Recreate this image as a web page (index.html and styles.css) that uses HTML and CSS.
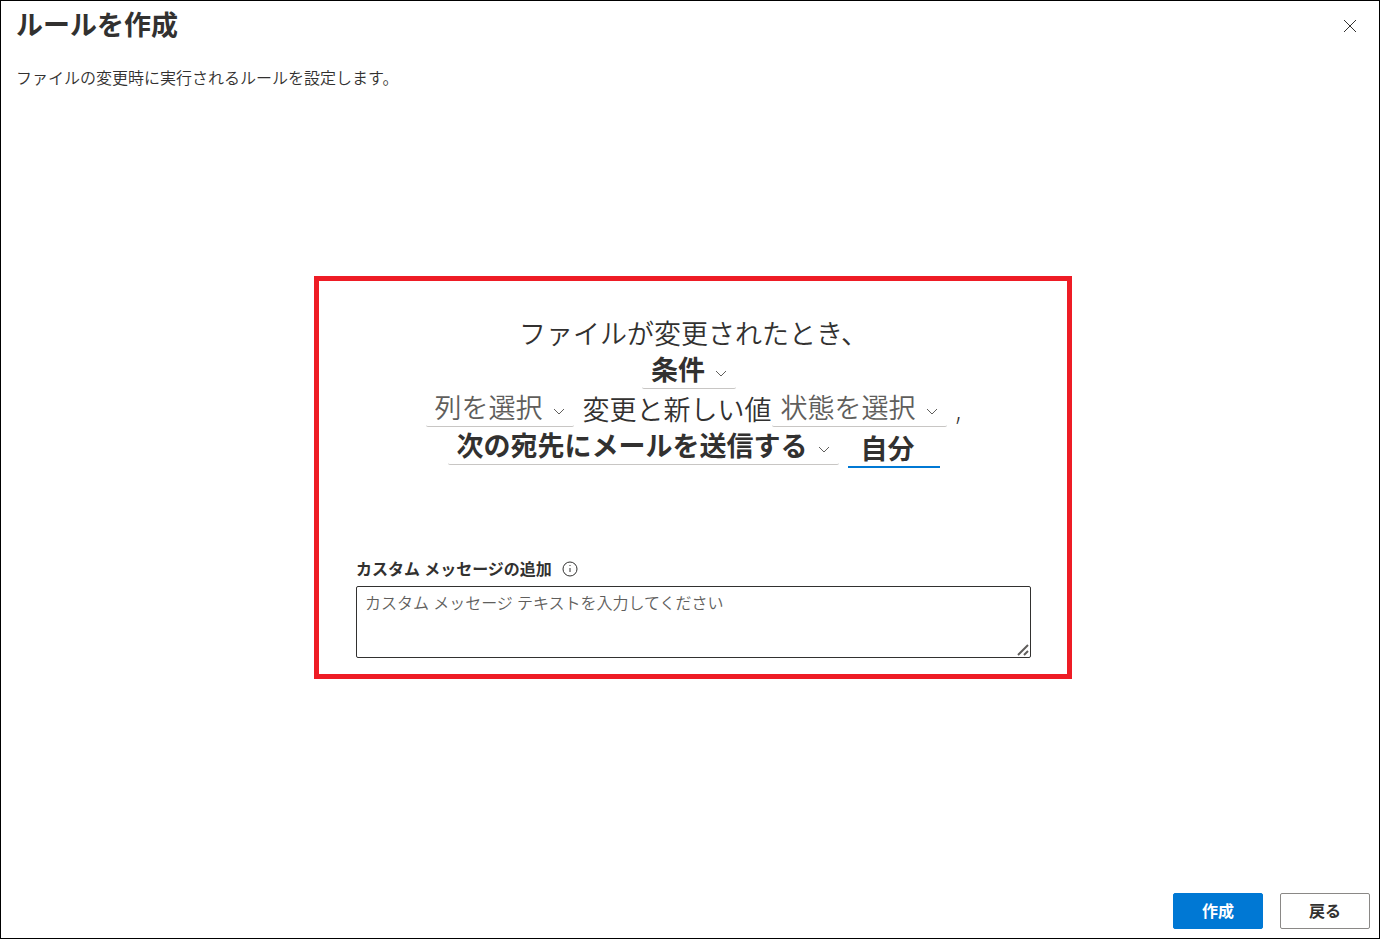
FILE: index.html
```html
<!DOCTYPE html>
<html lang="ja">
<head>
  <meta charset="UTF-8" />
  <meta name="viewport" content="width=device-width, initial-scale=1.0" />
  <title>ルールを作成</title>
  <link rel="stylesheet" href="styles.css">
</head>
<body>
  <div class="dialog" role="dialog" aria-labelledby="title">
    <header class="header">
      <h1 id="title">ルールを作成</h1>
      <button class="close" type="button" aria-label="閉じる">
        <svg width="14" height="14" viewBox="0 0 14 14"><path d="M1 1l12 12M13 1L1 13" /></svg>
      </button>
    </header>
    <p class="description">ファイルの変更時に実行されるルールを設定します。</p>

    <main class="content">
      <form class="card" id="rule">
        <div class="sentence">
          <div class="row">ファイルが変更されたとき、</div>
          <div class="row">
            <span class="dropdown chosen">
              <select aria-label="条件"><option>条件</option></select>
              <svg class="chevron" width="12" height="12" viewBox="0 0 12 12"><path d="M1 3l5 5 5-5" /></svg>
            </span>
          </div>
          <div class="row">
            <span class="dropdown">
              <select aria-label="列"><option>列を選択</option></select>
              <svg class="chevron" width="12" height="12" viewBox="0 0 12 12"><path d="M1 3l5 5 5-5" /></svg>
            </span>
            <span>変更と新しい値</span>
            <span class="dropdown">
              <select aria-label="状態"><option>状態を選択</option></select>
              <svg class="chevron" width="12" height="12" viewBox="0 0 12 12"><path d="M1 3l5 5 5-5" /></svg>
            </span>
            <span>,</span>
          </div>
          <div class="row">
            <span class="dropdown chosen">
              <select aria-label="アクション"><option>次の宛先にメールを送信する</option></select>
              <svg class="chevron" width="12" height="12" viewBox="0 0 12 12"><path d="M1 3l5 5 5-5" /></svg>
            </span>
            <input class="person" type="text" aria-label="宛先" value="自分">
          </div>
        </div>

        <div class="message-label">
          <label for="message">カスタム メッセージの追加</label>
          <svg class="info" width="16" height="16" viewBox="0 0 16 16">
            <circle cx="8" cy="8" r="7" />
            <path d="M8 7v4M8 4v1" />
          </svg>
        </div>
        <div class="message-box">
          <textarea class="message" id="message" placeholder="カスタム メッセージ テキストを入力してください"></textarea>
          <svg class="grip" width="12" height="12" viewBox="0 0 12 12"><path d="M1 11L11 1M7 11l4-4" /></svg>
        </div>
      </form>
    </main>

    <footer class="footer">
      <button class="btn primary" type="submit" form="rule">作成</button>
      <button class="btn" type="button">戻る</button>
    </footer>
  </div>
</body>
</html>
```

FILE: styles.css
```css
* {
  box-sizing: border-box;
}

body {
  margin: 0;
  padding: 0 1px 2px 0;
  min-height: 100vh;
  display: flex;
  background: #fff;
  color: #323130;
  font-family: "Open Sans", "Noto Sans CJK JP", sans-serif;
  font-size: 16px;
  font-weight: 350;
  line-height: 24px;
}

button,
input,
select,
textarea {
  font: inherit;
  color: inherit;
}

.dialog {
  flex: 1;
  display: flex;
  flex-direction: column;
  padding: 4px 9px 9px 15px;
  border: 1px solid #000;
}

.header {
  display: flex;
  justify-content: space-between;
  align-items: center;
}

h1 {
  margin: 0;
  font-size: 27px;
  line-height: 40px;
}

.close {
  display: flex;
  padding: 10px 8px 8px;
  margin-right: 5px;
  border: none;
  background: none;
  cursor: pointer;
}

svg {
  fill: none;
  stroke: #323130;
}

.description {
  margin: 21px 0 0;
}

.content {
  flex: 1;
  display: flex;
  align-items: center;
  justify-content: center;
}

.card {
  width: 758px;
  max-width: 100%;
  padding: 34px 36px 16px 37px;
  border: 5px solid #ee1c25;
}

.sentence {
  font-size: 27px;
  line-height: 38px;
}

.row {
  display: flex;
  flex-wrap: wrap;
  justify-content: center;
  align-items: flex-start;
  min-height: 38px;
}

.dropdown {
  position: relative;
  display: inline-flex;
  align-items: flex-start;
  height: 36px;
  margin-right: 9px;
  border-bottom: 1px solid #c8c6c4;
  border-radius: 2px;
  color: #605e5c;
}

.dropdown select {
  appearance: none;
  height: 35px;
  margin-top: -2px;
  padding: 0 31px 0 9px;
  border: none;
  background: none;
}

.chosen {
  color: #323130;
  font-weight: bold;
}

.chevron {
  position: absolute;
  right: 9px;
  bottom: 8px;
  stroke: #605e5c;
  pointer-events: none;
}

.person {
  width: 92px;
  height: 39px;
  padding: 0 13px;
  border: none;
  border-bottom: 2px solid #0078d4;
  background: none;
  font-weight: bold;
}

.message-label {
  display: flex;
  align-items: center;
  gap: 10px;
  margin: 89px 0 5px;
  font-weight: bold;
}

.message-box {
  position: relative;
}

.message {
  display: block;
  width: 100%;
  height: 72px;
  padding: 4px 8px;
  border: 1px solid #323130;
  border-radius: 2px;
  background: #fff;
  resize: vertical;
}

.message::placeholder {
  color: #605e5c;
}

.message::-webkit-resizer {
  background: none;
}

.grip {
  position: absolute;
  right: 2px;
  bottom: 2px;
  stroke: #605e5c;
  stroke-width: 2;
  pointer-events: none;
}

.footer {
  display: flex;
  justify-content: flex-end;
  gap: 17px;
  padding-top: 28px;
}

.btn {
  width: 90px;
  height: 36px;
  padding: 0;
  border: 1px solid #8a8886;
  border-radius: 2px;
  background: #fff;
  font-weight: bold;
  cursor: pointer;
}

.primary {
  border-color: #0078d4;
  background: #0078d4;
  color: #fff;
}
```
